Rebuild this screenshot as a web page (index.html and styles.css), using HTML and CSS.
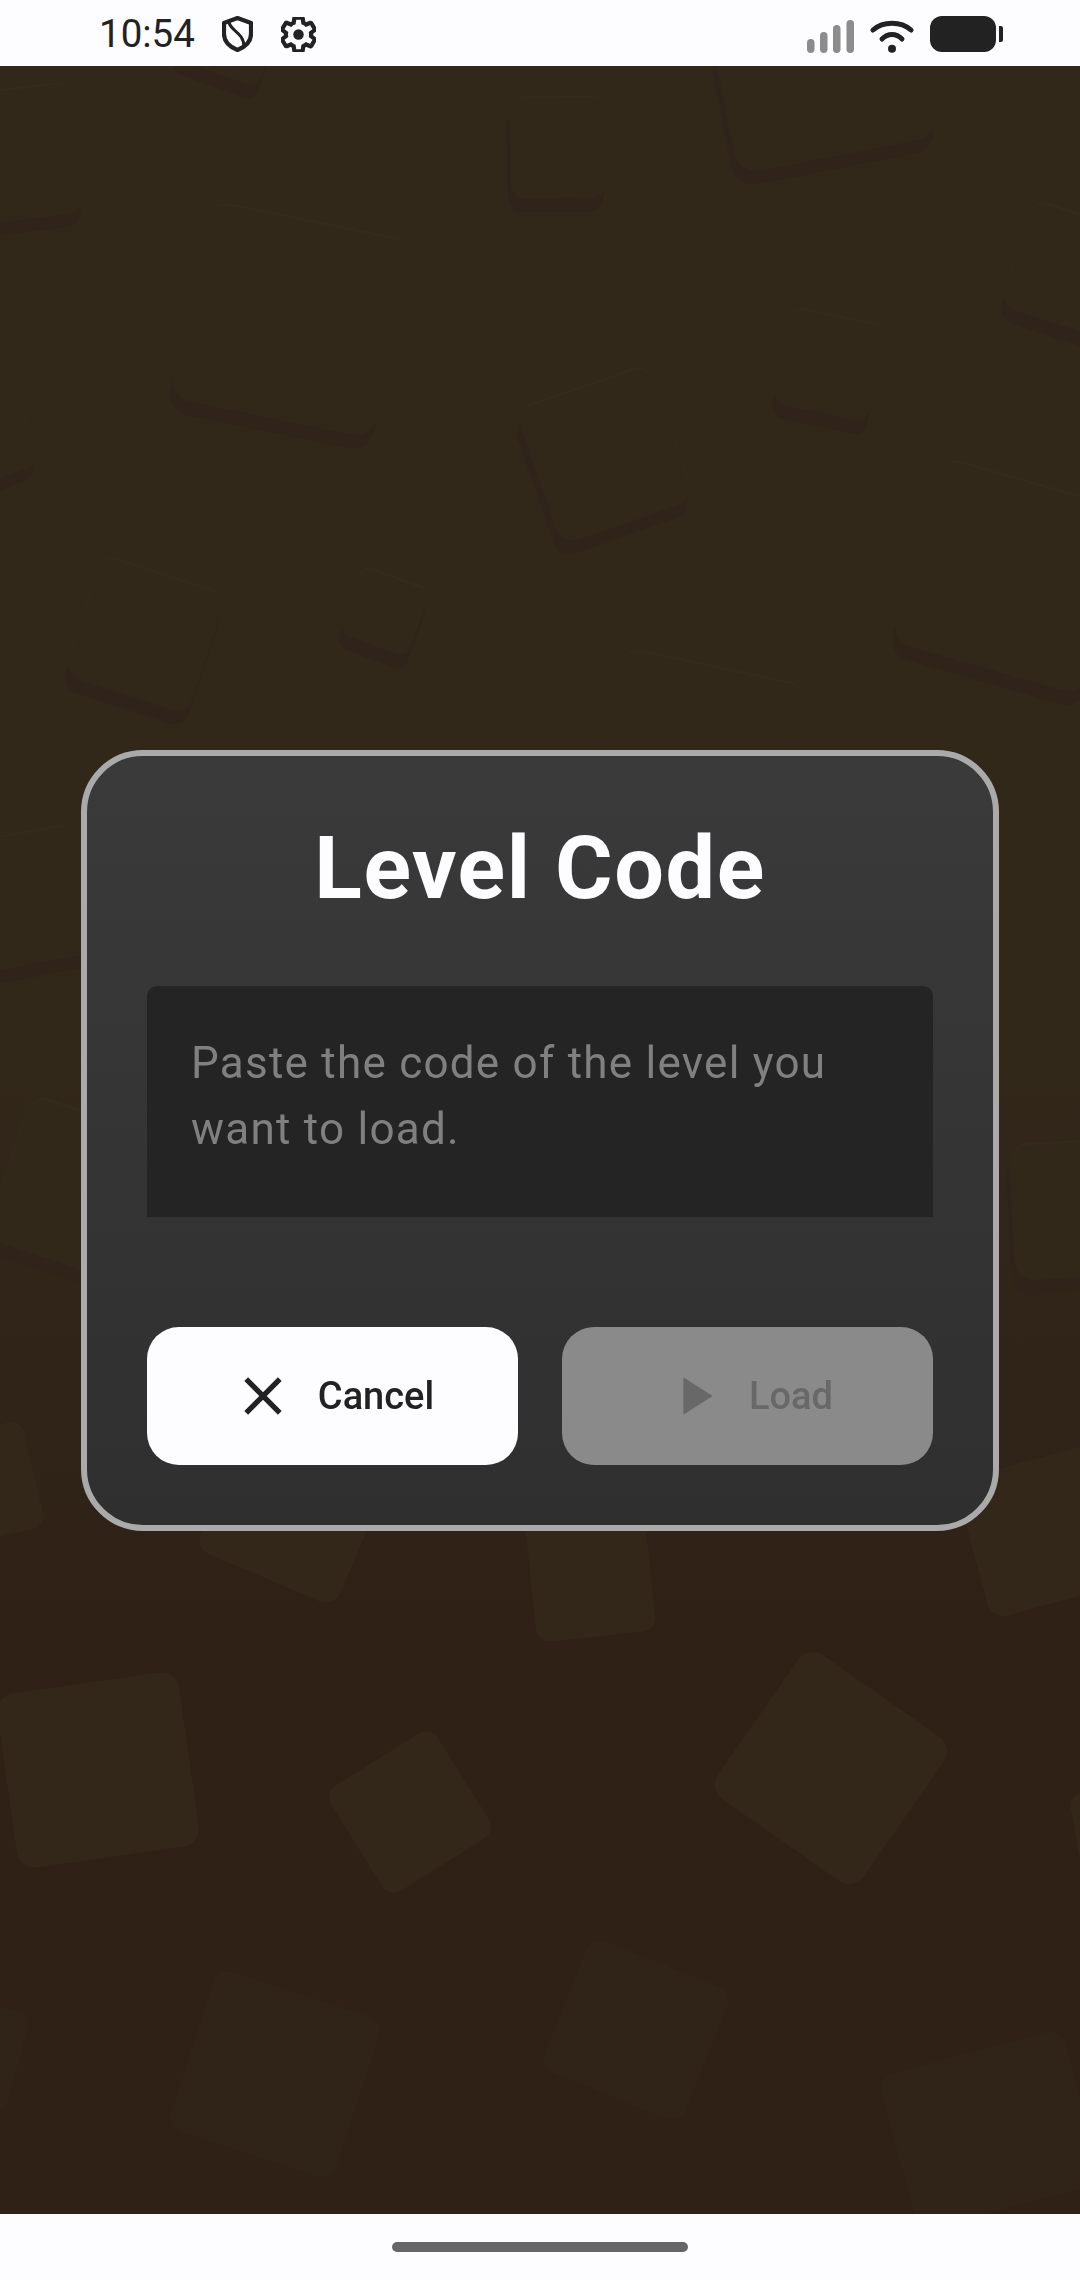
FILE: index.html
```html
<!DOCTYPE html>
<html lang="en">
<head>
  <meta charset="UTF-8">
  <meta name="viewport" content="width=device-width, initial-scale=1.0">
  <title>Level Code</title>
  <link rel="stylesheet" href="styles.css">
</head>
<body>
  <div class="status-bar">
    <div class="status-left">
      <span class="time">10:54</span>
      <svg class="shield" viewBox="0 0 31 36" width="31" height="36">
        <path d="M15.5 2 L29 7 V18 C29 26 23 31 15.5 34 C8 31 2 26 2 18 V7 Z"/>
        <path class="shield-curve" d="M7 6 C8 15 22 16 22 31"/>
      </svg>
      <svg class="gear" viewBox="2 2 20 20" width="35" height="35">
        <path d="M19.14,12.94c0.04-0.3,0.06-0.61,0.06-0.94c0-0.32-0.02-0.64-0.07-0.94l2.03-1.58c0.18-0.14,0.23-0.41,0.12-0.61 l-1.92-3.32c-0.12-0.22-0.37-0.29-0.59-0.22l-2.39,0.96c-0.5-0.38-1.03-0.7-1.62-0.94L14.4,2.81c-0.04-0.24-0.24-0.41-0.48-0.41 h-3.84c-0.24,0-0.43,0.17-0.47,0.41L9.25,5.35C8.66,5.59,8.12,5.92,7.63,6.29L5.24,5.33c-0.22-0.08-0.47,0-0.59,0.22L2.74,8.87 C2.62,9.08,2.66,9.34,2.86,9.48l2.03,1.58C4.84,11.36,4.8,11.69,4.8,12s0.02,0.64,0.07,0.94l-2.03,1.58 c-0.18,0.14-0.23,0.41-0.12,0.61l1.92,3.32c0.12,0.22,0.37,0.29,0.59,0.22l2.39-0.96c0.5,0.38,1.03,0.7,1.62,0.94l0.36,2.54 c0.05,0.24,0.24,0.41,0.48,0.41h3.84c0.24,0,0.44-0.17,0.47-0.41l0.36-2.54c0.59-0.24,1.13-0.56,1.62-0.94l2.39,0.96 c0.22,0.08,0.47,0,0.59-0.22l1.92-3.32c0.12-0.22,0.07-0.47-0.12-0.61L19.14,12.94z"/>
        <circle cx="12" cy="12" r="3"/>
      </svg>
    </div>
    <div class="status-right">
      <svg class="signal" viewBox="0 0 47 33" width="47" height="33">
        <rect x="0" y="19" width="7.5" height="14" rx="3.7"/>
        <rect x="13" y="12" width="7.5" height="21" rx="3.7"/>
        <rect x="26" y="5" width="7.5" height="28" rx="3.7"/>
        <rect x="39.5" y="0" width="7.5" height="33" rx="3.7"/>
      </svg>
      <svg class="wifi" viewBox="0 0 44 33" width="44" height="33">
        <path d="M3 10 C13 1 31 1 41 10"/>
        <path d="M12 19 C18 13 26 13 32 19"/>
        <circle cx="22" cy="28.7" r="4"/>
      </svg>
      <div class="battery"></div>
    </div>
  </div>

  <main class="screen">
    <!-- blocks behind the dialog: coordinates are screen pixels -->
    <svg class="blocks" viewBox="0 66 1080 2148">
      <g class="raised">
        <rect x="187" y="220" width="208" height="200" rx="22" transform="rotate(11.5 291 320)"/>
        <rect x="510.5" y="98" width="95" height="100" rx="14" transform="rotate(-1 558 148)"/>
        <rect x="717.5" y="-43" width="205" height="200" rx="22" transform="rotate(-11 820 57)"/>
        <rect x="-52" y="90" width="130" height="130" rx="16" transform="rotate(-7 13 155)"/>
        <rect x="185" y="-15" width="90" height="90" rx="12" transform="rotate(20 230 30)"/>
        <rect x="535" y="384" width="140" height="142" rx="16" transform="rotate(-19 605 455)"/>
        <rect x="781.5" y="316.5" width="97" height="97" rx="13" transform="rotate(12 830 365)"/>
        <rect x="1015" y="215" width="110" height="110" rx="14" transform="rotate(18 1070 270)"/>
        <rect x="913" y="482" width="200" height="190" rx="20" transform="rotate(16 1013 577)"/>
        <rect x="80" y="572.5" width="130" height="125" rx="16" transform="rotate(18 145 635)"/>
        <rect x="349" y="577" width="72" height="70" rx="10" transform="rotate(20 385 612)"/>
        <rect x="602" y="666" width="190" height="190" rx="20" transform="rotate(12 697 761)"/>
        <rect x="-85" y="375" width="110" height="110" rx="14" transform="rotate(-20 -30 430)"/>
        <rect x="-45" y="835" width="130" height="130" rx="16" transform="rotate(-10 20 900)"/>
        <rect x="5" y="1115" width="150" height="150" rx="18" transform="rotate(18 80 1190)"/>
        <rect x="1012.5" y="1142.5" width="125" height="135" rx="18" transform="rotate(-3 1075 1210)"/>
      </g>
      <g class="flat">
        <rect x="-75" y="1430" width="110" height="110" rx="14" transform="rotate(-13 -20 1485)"/>
        <rect x="218" y="1432" width="152" height="152" rx="16" transform="rotate(23 294 1508)"/>
        <rect x="530" y="1505" width="120" height="132" rx="14" transform="rotate(-6 590 1570)"/>
        <rect x="970" y="1460" width="140" height="144" rx="16" transform="rotate(-15 1040 1530)"/>
        <rect x="6" y="1682" width="184" height="176" rx="18" transform="rotate(-8 98 1770)"/>
        <rect x="347" y="1750" width="126" height="124" rx="14" transform="rotate(-32 410 1812)"/>
        <rect x="742" y="1680" width="178" height="176" rx="18" transform="rotate(35 831 1768)"/>
        <rect x="1075" y="1790" width="60" height="80" rx="12" transform="rotate(-10 1105 1830)"/>
      </g>
      <g class="flat faint">
        <rect x="-80" y="2000" width="100" height="100" rx="12" transform="rotate(15 -30 2050)"/>
        <rect x="188" y="1990" width="174" height="168" rx="16" transform="rotate(18 275 2074)"/>
        <rect x="560" y="1959" width="152" height="142" rx="16" transform="rotate(22 636 2030)"/>
        <rect x="895" y="2050" width="190" height="160" rx="16" transform="rotate(-15 990 2130)"/>
        <rect x="495" y="2225" width="60" height="60" rx="10" transform="rotate(45 525 2255)"/>
      </g>
    </svg>

    <section class="dialog">
      <h1 class="dialog-title">Level Code</h1>
      <div class="code-input">Paste the code of the level you want to load.</div>
      <div class="dialog-actions">
        <button class="btn btn-cancel">
          <svg class="btn-icon" viewBox="0 0 24 24" width="64" height="64">
            <path d="M19 6.41 17.59 5 12 10.59 6.41 5 5 6.41 10.59 12 5 17.59 6.41 19 12 13.41 17.59 19 19 17.59 13.41 12z"/>
          </svg>
          Cancel
        </button>
        <button class="btn btn-load">
          <svg class="btn-icon" viewBox="0 0 24 24" width="64" height="64">
            <path d="M8 5v14l11-7z"/>
          </svg>
          Load
        </button>
      </div>
    </section>
  </main>

  <div class="nav-bar">
    <div class="nav-handle"></div>
  </div>
</body>
</html>
```

FILE: styles.css
```css
body {
  margin: 0;
  width: 1080px;
  height: 2280px;
  display: flex;
  flex-direction: column;
  overflow: hidden;
  font-family: Roboto, "Liberation Sans", sans-serif;
  background-color: #fdfcff;
}

/* status bar */
.status-bar {
  height: 66px;
  flex-shrink: 0;
  box-sizing: border-box;
  display: flex;
  justify-content: space-between;
  align-items: center;
  padding: 2px 77px 0 99px;
  background-color: #fdfcff;
  color: #222;
}
.status-left,
.status-right {
  display: flex;
  align-items: center;
}
.time {
  font-size: 38.5px;
  line-height: 64px;
}
.shield {
  margin-left: 27px;
  fill: none;
  stroke: #222;
  stroke-width: 4.2;
  stroke-linejoin: round;
}
.shield-curve {
  stroke-width: 3;
}
.gear {
  margin-left: 28px;
  fill: none;
  stroke: #222;
  stroke-width: 2.4;
}
.gear circle {
  fill: #222;
  stroke: none;
}
.signal {
  fill: #8c8c8c;
  margin-top: 4px;
}
.wifi {
  margin-left: 16px;
  margin-top: 4px;
  fill: none;
  stroke: #222;
  stroke-width: 5;
  stroke-linecap: round;
}
.wifi circle {
  fill: #222;
  stroke: none;
}
.battery {
  position: relative;
  margin-left: 16px;
  margin-right: 7px;
  width: 66px;
  height: 36px;
  border-radius: 12px;
  background-color: #222;
}
.battery::after {
  content: "";
  position: absolute;
  left: 69px;
  top: 10px;
  width: 4px;
  height: 16px;
  border-radius: 0 2px 2px 0;
  background-color: #222;
}

/* background */
.screen {
  position: relative;
  flex: 1;
  display: flex;
  align-items: center;
  justify-content: center;
  padding-top: 1px;
  box-sizing: border-box;
  background: linear-gradient(#32281a 0%, #32281a 45%, #2f2116 72%, #2f2116 100%);
}
.blocks {
  position: absolute;
  left: 0;
  top: 0;
  width: 100%;
  height: 100%;
}
.raised {
  fill: #32281a;
  filter: drop-shadow(0 -2px 0 #342a1d) drop-shadow(-3px 14px 0 #30241a);
}
.flat {
  fill: #322718;
}
.faint {
  fill: #302418;
}

/* dialog */
.dialog {
  position: relative;
  width: 918px;
  height: 781px;
  box-sizing: border-box;
  padding: 60px;
  border: 6px solid #aaa;
  border-radius: 62px;
  background: linear-gradient(#3a3a3a, #2f2f2f);
}
.dialog-title {
  margin: 0 0 67px;
  font-size: 88px;
  line-height: 103px;
  font-weight: 700;
  letter-spacing: 1.6px;
  text-align: center;
  color: #fdfcff;
}
.code-input {
  height: 231px;
  box-sizing: border-box;
  padding: 44px 44px 0;
  border-radius: 10px 10px 0 0;
  background-color: #242424;
  color: #808080;
  font-size: 44px;
  line-height: 66px;
  letter-spacing: 1.25px;
}
.dialog-actions {
  display: flex;
  gap: 44px;
  margin-top: 110px;
}
.btn {
  flex: 1;
  height: 138px;
  display: flex;
  align-items: center;
  justify-content: center;
  gap: 23px;
  padding: 0;
  border: none;
  border-radius: 32px;
  font-family: inherit;
  font-size: 38px;
  font-weight: 500;
}
.btn-cancel {
  background-color: #fdfcff;
  color: #222;
}
.btn-load {
  background-color: #8a8a8a;
  color: #686868;
}
.btn-icon {
  fill: currentColor;
}

/* nav bar */
.nav-bar {
  height: 66px;
  flex-shrink: 0;
  display: flex;
  justify-content: center;
  padding-top: 28px;
  box-sizing: border-box;
  background-color: #fdfcff;
}
.nav-handle {
  width: 296px;
  height: 10px;
  border-radius: 5px;
  background-color: #666;
}
```
